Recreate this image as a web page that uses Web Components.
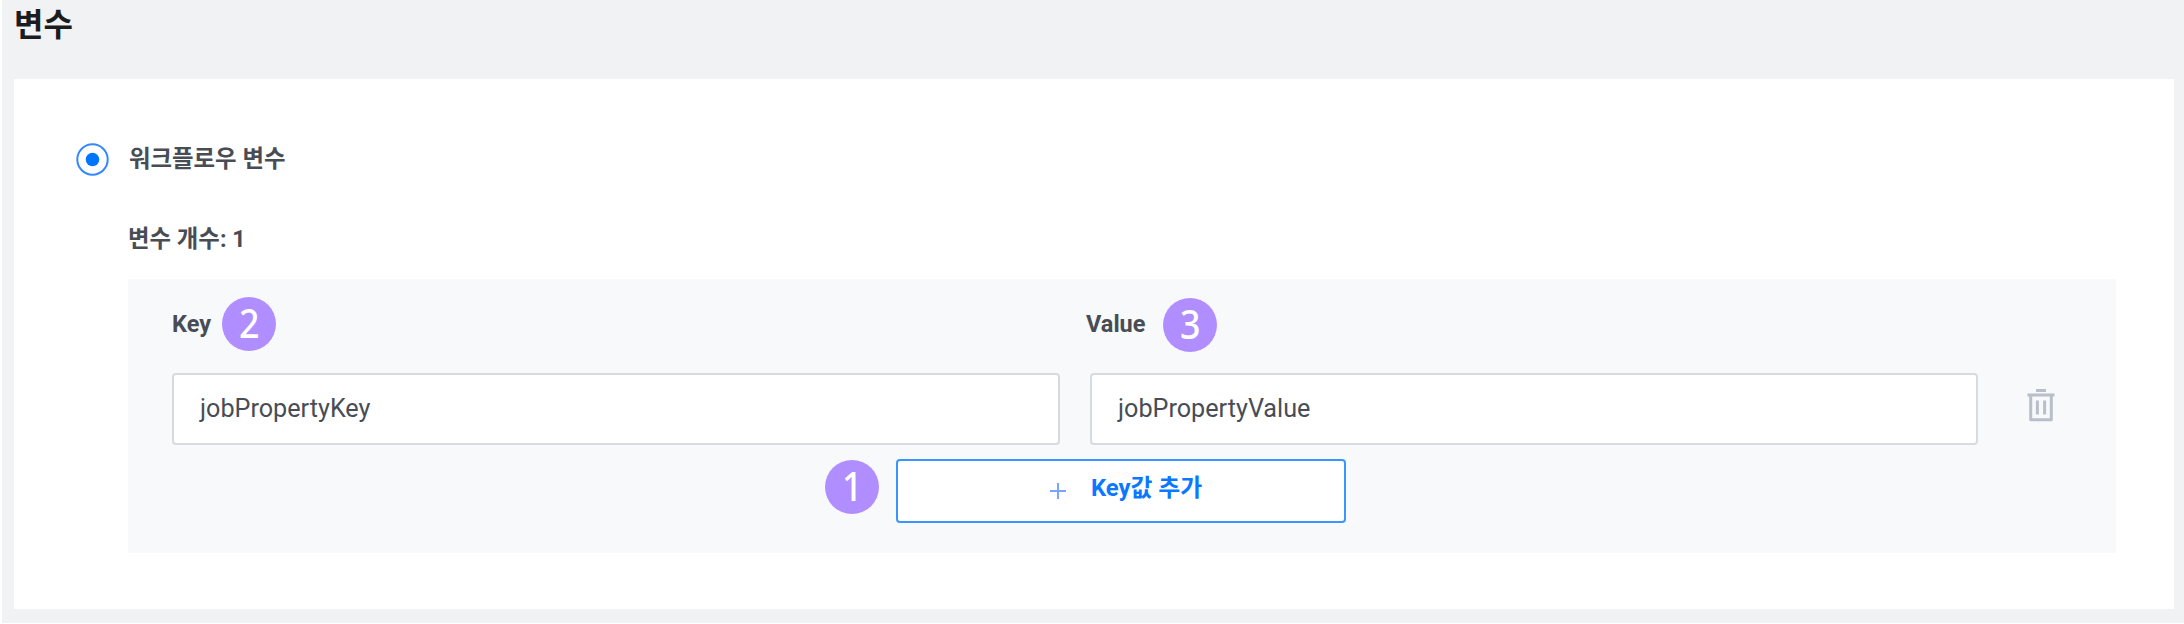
<!DOCTYPE html>
<html lang="ko">
<head>
<meta charset="utf-8">
<title>변수</title>
<style>
html, body { margin: 0; height: 624px; overflow: hidden; background: #fff; }
body { font-family: Roboto, "Noto Sans CJK KR", sans-serif; color: #484d55; }
</style>
</head>
<body>
<variable-page></variable-page>
<script>
const define = (name, html) => customElements.define(name, class extends HTMLElement {
  constructor() {
    super();
    this.attachShadow({ mode: 'open' }).innerHTML = html;
  }
});

define('step-badge', `
<style>
:host { display: flex; align-items: center; justify-content: center; box-sizing: border-box; width: 56px; height: 56px; border: 1px solid #fff; border-radius: 50%; background: #b08eff; color: #fff; font: 500 39px/52px "Noto Sans", sans-serif; }
span { display: block; height: 54px; transform: scaleX(.92); }
</style><span><slot></slot></span>`);

define('radio-option', `
<style>
:host { display: flex; align-items: center; height: 32px; gap: 20px; font-weight: 700; font-size: 23.4px; line-height: 32px; }
svg { display: block; width: 33px; height: 33px; }
</style>
<svg viewBox="0 0 33 33"><circle cx="16.5" cy="16.5" r="15.2" fill="#fff" stroke="#3388ff" stroke-width="2"/><circle cx="16.5" cy="16.5" r="6.8" fill="#0075ff"/></svg>
<span><slot></slot></span>`);

define('text-field', `
<style>
:host { display: flex; align-items: center; box-sizing: border-box; height: 72px; padding: 0 0 0 26px; border: 2px solid #d7dbe0; border-radius: 4px; background: #fff; font-size: 25.2px; line-height: 32px; }
</style><span><slot></slot></span>`);

define('trash-icon', `
<style>:host { display: block; width: 28px; height: 34px; } svg { display: block; }</style>
<svg width="28" height="34" viewBox="0 0 28 34" fill="none" stroke="#b9bfc9" stroke-width="3"><path d="M9 2.5H19"/><path d="M.5 7H27.5"/><path d="M3.7 8V31.7H24.3V8" stroke-linejoin="round"/><path d="M10.4 12.5V26.5M17.6 12.5V26.5"/></svg>`);

define('add-button', `
<style>
:host { display: flex; align-items: center; box-sizing: border-box; width: 450px; height: 64px; padding: 0 0 6px 152px; border: 2px solid #3995ff; border-radius: 4px; background: #fff; color: #0a78ff; font-weight: 700; font-size: 23.8px; line-height: 32px; }
svg { display: block; margin: 5px 25px 0 0; }
</style>
<svg width="16" height="16" viewBox="0 0 16 16" stroke="#78a5ff" stroke-width="2"><path d="M0 8H16M8 0V16"/></svg>
<span><slot></slot></span>`);

define('variable-panel', `
<style>
:host { display: block; box-sizing: border-box; width: 1988px; height: 274px; padding: 17px 0 0 44px; background: #f7f9fb; }
.heads { display: grid; grid-template-columns: 914px 1fr; height: 56px; }
.head { display: flex; align-items: center; font-weight: 700; font-size: 23.5px; line-height: 32px; }
.head span { width: 49px; }
.head.value span { width: 76px; }
.head.value step-badge { margin-bottom: -2px; }
.row { display: flex; align-items: center; margin-top: 21px; }
text-field { width: 888px; }
text-field + text-field { margin-left: 30px; }
trash-icon { margin: -9px 0 0 49px; }
.actions { display: flex; align-items: flex-start; margin: 14px 0 0 652px; gap: 16px; }
</style>
<div class="heads">
  <div class="head"><span>Key</span><step-badge>2</step-badge></div>
  <div class="head value"><span>Value</span><step-badge>3</step-badge></div>
</div>
<div class="row"><text-field>jobPropertyKey</text-field><text-field>jobPropertyValue</text-field><trash-icon></trash-icon></div>
<div class="actions"><step-badge>1</step-badge><add-button>Key값 추가</add-button></div>`);

define('variable-page', `
<style>
:host { display: block; box-sizing: border-box; height: 623px; margin-left: 2px; padding-left: 12px; background: #f1f2f4; }
h1 { margin: 0; height: 79px; font-size: 32px; line-height: 50px; color: #1b1c20; }
.card { box-sizing: border-box; width: 2160px; height: 530px; padding: 64px 0 0 62px; background: #fff; }
.count { margin: 48px 0 24px 52px; font-weight: 700; font-size: 23.4px; line-height: 32px; }
variable-panel { margin-left: 52px; }
</style>
<h1>변수</h1>
<div class="card">
  <radio-option>워크플로우 변수</radio-option>
  <div class="count">변수 개수: 1</div>
  <variable-panel></variable-panel>
</div>`);
</script>
</body>
</html>
